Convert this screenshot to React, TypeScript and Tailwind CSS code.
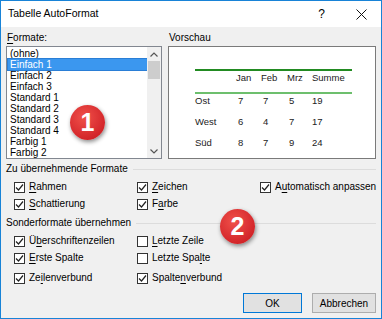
import React from "react";

const font = { fontFamily: '"Liberation Sans", Arial, sans-serif' };

const formate = [
  "(ohne)",
  "Einfach 1",
  "Einfach 2",
  "Einfach 3",
  "Standard 1",
  "Standard 2",
  "Standard 3",
  "Standard 4",
  "Farbig 1",
  "Farbig 2",
];

// label with one underlined accelerator letter
const Acc: React.FC<{ text: string; at: number }> = ({ text, at }) => (
  <span>
    {text.slice(0, at)}
    <u className="underline-offset-2">{text[at]}</u>
    {text.slice(at + 1)}
  </span>
);

const Check: React.FC<{ checked: boolean; text: string; at: number }> = ({ checked, text, at }) => (
  <div className="flex items-center h-[16px]">
    <div className="w-[11px] h-[11px] border border-[#333] bg-white flex items-center justify-center shrink-0">
      {checked && (
        <svg width="9" height="9" viewBox="0 0 9 9">
          <path d="M1 4.5 L3.5 7 L8 1.5" fill="none" stroke="#222" strokeWidth="1.2" />
        </svg>
      )}
    </div>
    <span className="ml-[4px] text-[10px] leading-[12px] text-black whitespace-nowrap">
      <Acc text={text} at={at} />
    </span>
  </div>
);

const GroupHead: React.FC<{ title: string }> = ({ title }) => (
  <div className="flex items-center h-[12px]">
    <span className="text-[10px] leading-[12px] whitespace-nowrap">{title}</span>
    <div className="flex-1 h-px bg-[#dcdcdc] ml-[5px]" />
  </div>
);

const Badge: React.FC<{ n: string; className: string }> = ({ n, className }) => (
  <div
    className={
      "absolute w-[35px] h-[35px] rounded-full flex items-center justify-center text-white text-[25px] font-bold shadow-[1px_2px_4px_rgba(0,0,0,0.45)] bg-[radial-gradient(circle_at_40%_35%,#f0504a,#d3262a_70%,#b71c1c)] " +
      className
    }
  >
    {n}
  </div>
);

const rows = [
  ["Ost", "7", "7", "5", "19"],
  ["West", "6", "4", "7", "17"],
  ["Süd", "8", "7", "9", "24"],
];

const Row: React.FC<{ cells: string[] }> = ({ cells }) => (
  <div className="flex h-[21px] pt-[1px] leading-[12px]">
    <span className="w-[41px]">{cells[0]}</span>
    <span className="w-[25px] pl-[2px]">{cells[1]}</span>
    <span className="w-[26px] pl-[2px]">{cells[2]}</span>
    <span className="w-[25px] pl-[2px]">{cells[3]}</span>
    <span>{cells[4]}</span>
  </div>
);

const App: React.FC = () => {
  return (
    <div
      className="relative w-[382px] h-[319px] border border-[#1883d7] bg-[#f0f0f0] flex flex-col text-black overflow-hidden"
      style={font}
    >
      {/* title bar */}
      <div className="h-[26px] bg-white flex items-center pl-[7px] shrink-0">
        <span className="text-[10.5px] flex-1">Tabelle AutoFormat</span>
        <span className="text-[12px] mr-[31px]">?</span>
        <svg width="11" height="11" viewBox="0 0 11 11" className="mr-[14px]">
          <path d="M0.5 0.5 L10.5 10.5 M10.5 0.5 L0.5 10.5" stroke="#111" strokeWidth="1" />
        </svg>
      </div>

      <div className="flex-1 flex flex-col pl-[5px] pr-[5px]">
        {/* top: list + preview */}
        <div className="flex mt-[5px]">
          <div className="w-[156px] flex flex-col">
            <div className="text-[10px] leading-[12px] h-[14px] pl-[1px]">
              <Acc text="Formate:" at={0} />
            </div>
            <div className="h-[113px] border border-[#828790] bg-white flex">
              <div className="flex-1 pt-[1px] pl-[1px] text-[10px] leading-[11px]">
                {formate.map((f, i) => (
                  <div
                    key={f}
                    className={
                      "h-[11px] pl-[2px] " +
                      (i === 1 ? "bg-[#3b97ef] text-white outline outline-1 outline-[#2a7ed6]" : "")
                    }
                  >
                    {f}
                  </div>
                ))}
              </div>
              <div className="w-[14px] flex flex-col bg-[#f0f0f0]">
                <div className="h-[14px] flex items-center justify-center">
                  <svg width="8" height="5" viewBox="0 0 8 5">
                    <path d="M0.5 4.5 L4 1 L7.5 4.5" fill="none" stroke="#555" strokeWidth="1.2" />
                  </svg>
                </div>
                <div className="h-[18px] mx-[1px] bg-[#cdcdcd]" />
                <div className="flex-1" />
                <div className="h-[14px] flex items-center justify-center">
                  <svg width="8" height="5" viewBox="0 0 8 5">
                    <path d="M0.5 0.5 L4 4 L7.5 0.5" fill="none" stroke="#555" strokeWidth="1.2" />
                  </svg>
                </div>
              </div>
            </div>
          </div>

          <div className="ml-[6px] flex-1 flex flex-col">
            <div className="text-[10px] leading-[12px] h-[14px] pl-[1px]">Vorschau</div>
            <div className="h-[113px] border border-[#7a7a7a] bg-white text-[9.5px] text-[#222]">
              <div className="ml-[26px] mt-[22px] w-[157px]">
                <div className="h-[2px] bg-[#228b22]" />
                <div className="flex h-[21px] pt-[1px] leading-[12px]">
                  <span className="w-[41px]" />
                  <span className="w-[25px]">Jan</span>
                  <span className="w-[26px]">Feb</span>
                  <span className="w-[25px]">Mrz</span>
                  <span>Summe</span>
                </div>
                <div className="h-[2px] bg-[#6dbf6d]" />
                {rows.map((r) => (
                  <Row key={r[0]} cells={r} />
                ))}
              </div>
            </div>
          </div>
        </div>

        {/* group 1 */}
        <div className="mt-[4px]">
          <GroupHead title="Zu übernehmende Formate" />
        </div>
        <div className="grid grid-cols-[123px_123px_1fr] pl-[8px] mt-[4px] gap-y-[1px]">
          <Check checked text="Rahmen" at={0} />
          <Check checked text="Zeichen" at={0} />
          <Check checked text="Automatisch anpassen" at={1} />
          <Check checked text="Schattierung" at={0} />
          <Check checked text="Farbe" at={1} />
        </div>

        {/* group 2 */}
        <div className="mt-[5px]">
          <GroupHead title="Sonderformate übernehmen" />
        </div>
        <div className="grid grid-cols-[123px_1fr] pl-[8px] mt-[4px] gap-y-[1px]">
          <Check checked text="Überschriftenzeilen" at={1} />
          <Check checked={false} text="Letzte Zeile" at={0} />
          <Check checked text="Erste Spalte" at={0} />
          <Check checked={false} text="Letzte Spalte" at={10} />
          <div className="mt-[3px]">
            <Check checked text="Zeilenverbund" at={2} />
          </div>
          <div className="mt-[3px]">
            <Check checked text="Spaltenverbund" at={6} />
          </div>
        </div>

        {/* buttons */}
        <div className="mt-auto mb-[5px] flex justify-end gap-[10px] text-[10px]">
          <button className="w-[59px] h-[20px] border border-[#0078d7] bg-[#e1e1e1]">OK</button>
          <button className="w-[64px] h-[20px] border border-[#adadad] bg-[#e1e1e1]">Abbrechen</button>
        </div>
      </div>

      <Badge n="1" className="left-[69px] top-[104px]" />
      <Badge n="2" className="left-[219px] top-[208px]" />
    </div>
  );
};

export default App;
